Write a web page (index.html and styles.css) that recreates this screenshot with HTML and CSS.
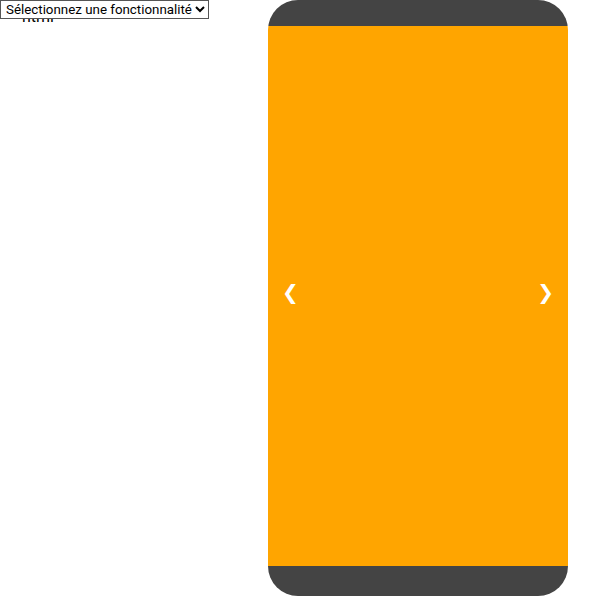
FILE: index.html
```html
<!DOCTYPE html>
<html lang="fr">
<head>
<meta charset="utf-8">
<title>Fonctionnalités</title>
<link rel="stylesheet" href="styles.css">
</head>
<body>
<select class="picker">
  <option>Sélectionnez une fonctionnalité</option>
  <option>html</option>
</select>
<div class="layout">
  <div class="side">
    <div class="label">html</div>
  </div>
  <div class="phone">
    <div class="bar bar-top"></div>
    <div class="screen">
      <span class="nav">&#10094;</span>
      <span class="nav">&#10095;</span>
    </div>
    <div class="bar bar-bottom"></div>
  </div>
</div>
</body>
</html>
```
FILE: styles.css
```css
html, body {
  margin: 0;
  padding: 0;
  background: #ffffff;
}
body {
  font-family: Roboto, "Liberation Sans", sans-serif;
  position: relative;
}
.picker {
  position: absolute;
  top: 0;
  left: 0;
  z-index: 2;
  height: 19px;
  font-family: Roboto, "Liberation Sans", sans-serif;
  font-size: 13.33px;
  color: #000;
  background: #fff;
  border: 1px solid #555;
  border-radius: 0;
  padding: 0 0 0 1px;
  margin: 0;
}
.layout {
  display: flex;
}
.side {
  width: 268px;
  padding-top: 7px;
}
.label {
  padding-left: 22px;
  font-size: 16px;
  color: #000;
}
.phone {
  width: 300px;
  border-radius: 30px;
  overflow: hidden;
  display: flex;
  flex-direction: column;
}
.bar {
  background: #444444;
}
.bar-top {
  height: 26px;
}
.bar-bottom {
  height: 30px;
}
.screen {
  height: 540px;
  background: #ffa500;
  display: flex;
  align-items: center;
  justify-content: space-between;
  padding: 0 14px 8px;
  box-sizing: border-box;
}
.nav {
  color: #fff;
  font-family: "DejaVu Sans", sans-serif;
  font-size: 20px;
  font-weight: bold;
}
```
